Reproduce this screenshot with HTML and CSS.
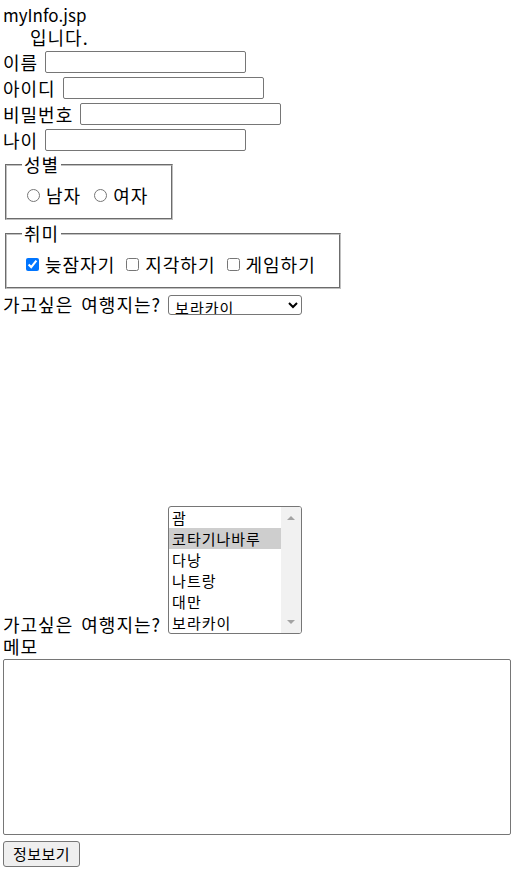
FILE: index.html
```html
<!DOCTYPE html>
<html lang="ko">
<head>
<meta charset="utf-8">
<title>myInfo.jsp</title>
<link rel="stylesheet" href="styles.css">
</head>
<body>
<div class="title">myInfo.jsp</div>
<div class="greet">입니다.</div>
<form class="form">
  <div class="row"><span>이름</span><input class="txt" type="text"></div>
  <div class="row"><span>아이디</span><input class="txt" type="text"></div>
  <div class="row"><span>비밀번호</span><input class="txt" type="password"></div>
  <div class="row"><span>나이</span><input class="txt" type="text"></div>
  <fieldset class="group">
    <legend class="legend">성별</legend>
    <div class="choices">
      <label class="choice"><input type="radio" name="gender">남자</label>
      <label class="choice"><input type="radio" name="gender">여자</label>
    </div>
  </fieldset>
  <fieldset class="group group-hobby">
    <legend class="legend">취미</legend>
    <div class="choices">
      <label class="choice"><input type="checkbox" checked>늦잠자기</label>
      <label class="choice"><input type="checkbox">지각하기</label>
      <label class="choice"><input type="checkbox">게임하기</label>
    </div>
  </fieldset>
  <div class="row row-select"><span>가고싶은 여행지는?</span>
    <select class="drop">
      <option>괌</option>
      <option>코타기나바루</option>
      <option>다낭</option>
      <option>나트랑</option>
      <option>대만</option>
      <option selected>보라카이</option>
    </select>
  </div>
  <div class="row-list"><span class="list-label">가고싶은 여행지는?</span>
    <div class="listbox">
      <div class="opts">
        <div class="opt">괌</div>
        <div class="opt sel">코타기나바루</div>
        <div class="opt">다낭</div>
        <div class="opt">나트랑</div>
        <div class="opt">대만</div>
        <div class="opt">보라카이</div>
      </div>
      <div class="scroll">
        <span class="arrow up"></span>
        <span class="arrow down"></span>
      </div>
    </div>
  </div>
  <div class="memo-label">메모</div>
  <textarea class="memo"></textarea>
  <div class="actions"><button type="button" class="btn">정보보기</button></div>
</form>
</body>
</html>
```
FILE: styles.css
```css
html, body {
  background: #fff;
}
body {
  margin: 0;
  padding: 3px 3px 0 3px;
  font-family: "Noto Sans CJK KR", "Noto Sans", sans-serif;
  font-size: 18px;
  letter-spacing: 1px;
  word-spacing: 2px;
  line-height: 23px;
  color: #000;
}
.title {
  height: 23px;
  font-size: 17px;
  letter-spacing: 0;
  word-spacing: 0;
}
.greet {
  height: 23px;
  padding-left: 27px;
}
.form {
  margin: 0;
}
.row {
  display: flex;
  align-items: center;
  gap: 7px;
  height: 26px;
  line-height: 26px;
}
.txt {
  box-sizing: border-box;
  width: 201px;
  height: 22px;
  margin: 0;
  border: 1px solid #767676;
  border-radius: 2px;
  padding: 1px 2px;
  font-size: 13px;
  background: #fff;
}
.group {
  width: fit-content;
  margin: 0 2px;
  padding: 6px 23px 10px 15px;
  border: 2px groove rgb(192, 192, 192);
}
.group-hobby {
  margin-top: 2px;
}
.legend {
  padding: 0 2px;
  line-height: 23px;
  height: 23px;
  margin-left: 0;
}
.choices {
  display: flex;
  align-items: center;
  gap: 8px;
  height: 26px;
  line-height: 26px;
}
.choice {
  display: flex;
  align-items: center;
  white-space: nowrap;
}
.choice input {
  width: 13px;
  height: 13px;
  margin: 1px 6px 0 5px;
}
.group-hobby .choices {
  gap: 7px;
}
.group-hobby .choice input {
  margin: 1px 6px 0 4px;
}
.row-select {
  margin-top: 2px;
  gap: 7px;
}
.drop {
  box-sizing: border-box;
  width: 134px;
  height: 20px;
  margin: 2px 0 0 0;
  border: 1px solid #767676;
  border-radius: 3px;
  font-family: "Noto Sans CJK KR", sans-serif;
  font-size: 15px;
  letter-spacing: 1px;
  line-height: 18px;
  padding: 0 0 0 2px;
  background: #fff;
  color: #000;
}
.row-list {
  display: flex;
  align-items: flex-end;
  gap: 7px;
  margin-top: 189px;
}
.list-label {
  line-height: 20px;
  height: 20px;
}
.listbox {
  box-sizing: border-box;
  display: flex;
  width: 134px;
  height: 128px;
  border: 1px solid #767676;
  border-radius: 3px;
  overflow: hidden;
  background: #fff;
}
.opts {
  width: 112px;
  display: flex;
  flex-direction: column;
}
.opt {
  height: 21px;
  line-height: 21px;
  padding-left: 3px;
  font-size: 15px;
  letter-spacing: 1px;
  white-space: nowrap;
}
.opt.sel {
  background: #cecece;
}
.scroll {
  flex: 1;
  background: #f1f1f1;
  display: flex;
  flex-direction: column;
  justify-content: space-between;
  align-items: center;
  padding: 9px 0 9px;
}
.arrow {
  width: 0;
  height: 0;
  border-left: 4px solid transparent;
  border-right: 4px solid transparent;
}
.arrow.up {
  border-bottom: 4px solid #a3a3a3;
}
.arrow.down {
  border-top: 4px solid #a3a3a3;
}
.memo-label {
  height: 25px;
  line-height: 25px;
}
.memo {
  display: block;
  box-sizing: border-box;
  width: 508px;
  height: 176px;
  margin: 0;
  border: 1px solid #767676;
  border-radius: 2px;
  resize: none;
}
.actions {
  margin-top: 6px;
}
.btn {
  box-sizing: border-box;
  width: 77px;
  height: 26px;
  margin: 0;
  padding: 0;
  border: 1px solid #767676;
  border-radius: 3px;
  background: #efefef;
  font-family: "Noto Sans CJK KR", sans-serif;
  font-size: 15px;
  letter-spacing: 0.5px;
  line-height: 22px;
  color: #000;
}
```
